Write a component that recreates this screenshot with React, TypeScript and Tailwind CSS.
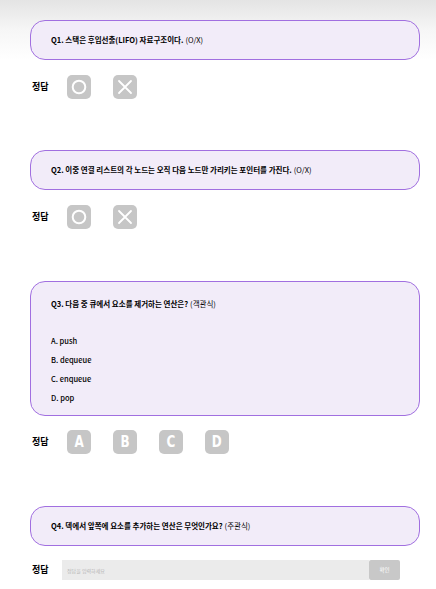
import React from "react";

const font = { fontFamily: '"Noto Sans CJK KR", "Noto Sans", sans-serif' };

const QuestionCard = ({ title, tag, children, head = "h-[38px]" }: { title: string; tag: string; children?: React.ReactNode; head?: string }) => (
  <div className="ml-[30px] w-[390px] rounded-[15px] border border-[#a16fe0] bg-[#f2ecf9] px-[20px]">
    <div className={`flex ${head} items-center text-[7.5px] leading-[12px] text-black`}>
      <span className="font-bold">{title}</span>
      <span className="ml-[2px]">{tag}</span>
    </div>
    {children}
  </div>
);

const AnswerBtn = ({ children }: { children: React.ReactNode }) => (
  <button className="flex h-[24px] w-[24px] items-center justify-center rounded-[5px] bg-[#c6c6c6]">
    {children}
  </button>
);

const Label = () => <span className="w-[37px] pl-[2px] text-[9px] font-bold text-black">정답</span>;

const OXRow = () => (
  <div className="mt-[15px] flex items-center pl-[30px]">
    <Label />
    <div className="flex gap-[22px]">
      <AnswerBtn>
        <svg width="16" height="16" viewBox="0 0 16 16">
          <circle cx="8" cy="8" r="6.3" fill="none" stroke="white" strokeWidth="2" />
        </svg>
      </AnswerBtn>
      <AnswerBtn>
        <svg width="16" height="16" viewBox="0 0 16 16">
          <path d="M2 2 L14 14 M14 2 L2 14" stroke="white" strokeWidth="1.8" strokeLinecap="round" />
        </svg>
      </AnswerBtn>
    </div>
  </div>
);

export default function App() {
  const options = ["A. push", "B. dequeue", "C. enqueue", "D. pop"];
  return (
    <div
      className="min-h-screen w-[436px] bg-[linear-gradient(to_bottom,#e4e4e4_0px,#f6f6f6_30px,#ffffff_60px)] pt-[20px]"
      style={font}
    >
      <QuestionCard title="Q1. 스택은 후입선출(LIFO) 자료구조이다." tag="(O/X)" />
      <OXRow />

      <div className="mt-[51px]">
        <QuestionCard title="Q2. 이중 연결 리스트의 각 노드는 오직 다음 노드만 가리키는 포인터를 가진다." tag="(O/X)" />
      </div>
      <OXRow />

      <div className="mt-[52px]">
        <QuestionCard title="Q3. 다음 중 큐에서 요소를 제거하는 연산은?" tag="(객관식)" head="h-[43px]">
          <div className="flex flex-col pb-[8px] pt-[6px]">
            {options.map((o) => (
              <div key={o} className="flex h-[19px] items-center text-[7.5px] font-medium text-black">
                {o}
              </div>
            ))}
          </div>
        </QuestionCard>
      </div>
      <div className="mt-[14px] flex items-center pl-[30px]">
        <Label />
        <div className="flex gap-[22px]">
          {["A", "B", "C", "D"].map((l) => (
            <AnswerBtn key={l}>
              <span
                className="inline-block scale-x-75 text-[16px] font-bold leading-none text-white"
                style={{ fontFamily: '"DejaVu Sans", sans-serif' }}
              >
                {l}
              </span>
            </AnswerBtn>
          ))}
        </div>
      </div>

      <div className="mt-[52px]">
        <QuestionCard title="Q4. 덱에서 앞쪽에 요소를 추가하는 연산은 무엇인가요?" tag="(주관식)" />
      </div>
      <div className="mt-[14px] flex items-center pl-[30px]">
        <span className="w-[32px] pl-[2px] text-[9px] font-bold text-black">정답</span>
        <div className="flex h-[20px] w-[338px]">
          <input
            className="h-full flex-1 bg-[#ebebeb] px-[5px] text-[5px] outline-none placeholder:text-[#b5b5b5]"
            placeholder="정답을 입력하세요"
          />
          <button className="h-full w-[31px] rounded-[2px] bg-[#c8c8c8] text-[5.5px] text-white">확인</button>
        </div>
      </div>
    </div>
  );
}
